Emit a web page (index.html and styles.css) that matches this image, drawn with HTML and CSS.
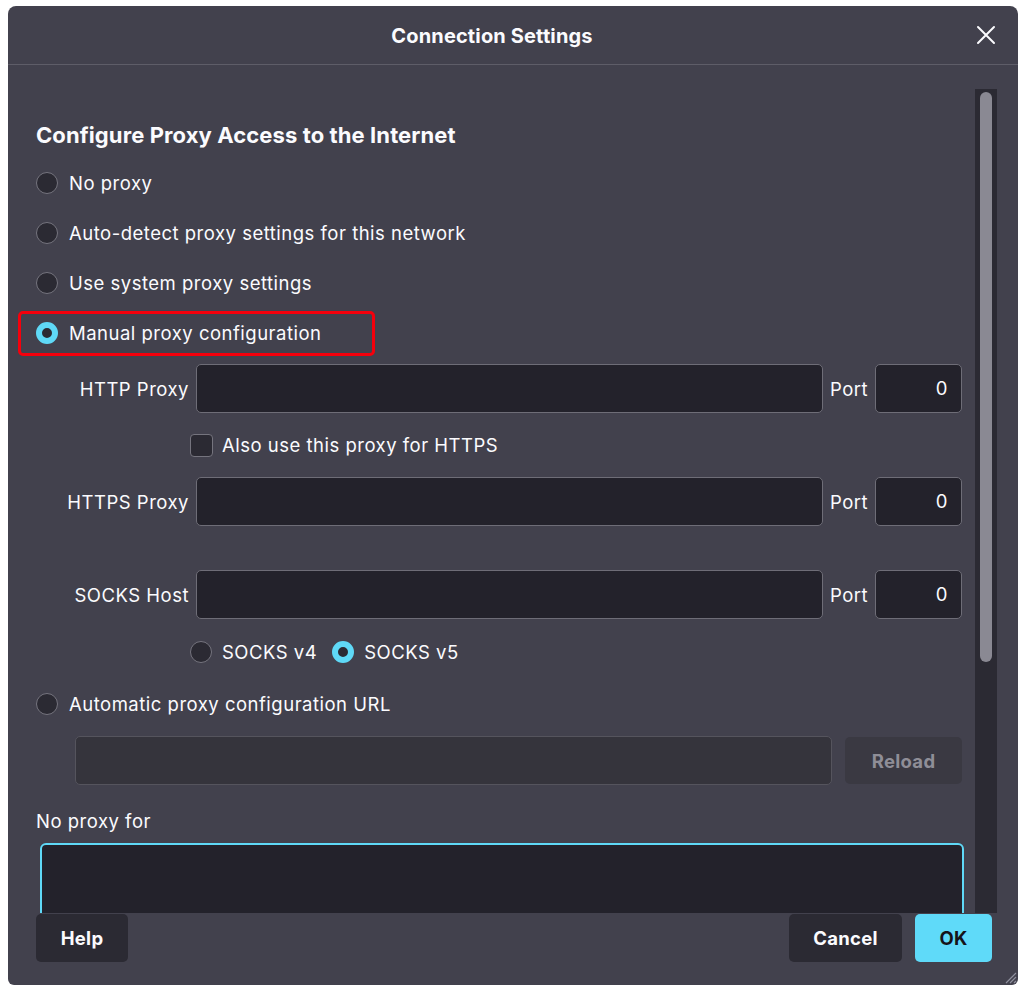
FILE: index.html
```html
<!DOCTYPE html>
<html lang="en">
<head>
    <meta charset="UTF-8">
    <title>Connection Settings</title>
    <link rel="stylesheet" href="styles.css">
</head>
<body>

<div class="dialog">
    <div class="header">
        <div class="title">Connection Settings</div>
        <div class="close">
            <svg width="20" height="20" viewBox="0 0 20 20"><path d="M2 2 L18 18 M18 2 L2 18" stroke="#fbfbfe" stroke-width="2" stroke-linecap="round"/></svg>
        </div>
    </div>
    <div class="separator"></div>

    <div class="scroller">
        <div class="content">
            <h2>Configure Proxy Access to the Internet</h2>

            <div class="opt"><span class="radio"></span>No proxy</div>
            <div class="opt"><span class="radio"></span>Auto-detect proxy settings for this network</div>
            <div class="opt"><span class="radio"></span>Use system proxy settings</div>
            <div class="opt"><div class="highlight"><span class="radio checked"></span>Manual proxy configuration</div></div>

            <div class="field-row">
                <div class="field-label">HTTP Proxy</div>
                <div class="input"></div>
                <div class="port-label">Port</div>
                <div class="input port">0</div>
            </div>
            <div class="check-row"><span class="checkbox"></span>Also use this proxy for HTTPS</div>
            <div class="field-row">
                <div class="field-label">HTTPS Proxy</div>
                <div class="input"></div>
                <div class="port-label">Port</div>
                <div class="input port">0</div>
            </div>
            <div class="field-row socks">
                <div class="field-label">SOCKS Host</div>
                <div class="input"></div>
                <div class="port-label">Port</div>
                <div class="input port">0</div>
            </div>
            <div class="socks-row">
                <span class="radio"></span><span class="socks-v4">SOCKS v4</span>
                <span class="radio checked"></span>SOCKS v5
            </div>

            <div class="opt auto"><span class="radio"></span>Automatic proxy configuration URL</div>
            <div class="url-row">
                <div class="input disabled"></div>
                <div class="btn reload">Reload</div>
            </div>

            <div class="noproxy-label">No proxy for</div>
            <div class="textarea"></div>
        </div>
        <div class="track"><div class="thumb"></div></div>
    </div>

    <div class="footer">
        <div class="btn help">Help</div>
        <div class="spacer"></div>
        <div class="btn cancel">Cancel</div>
        <div class="btn primary">OK</div>
    </div>

    <svg class="grip" width="14" height="14" viewBox="0 0 14 14"><path d="M13 3 L3 13 M13 7 L7 13 M13 11 L11 13" stroke="#8f8f9d" stroke-width="1.2"/></svg>
</div>

</body>
</html>
```

FILE: styles.css
```css
body {
    margin: 0;
    background-color: #fff;
    font-family: Inter, "Noto Sans", sans-serif;
    color: #fbfbfe;
}
.dialog {
    position: relative;
    display: flex;
    flex-direction: column;
    width: 1010px;
    height: 979px;
    margin: 6px 0 0 8px;
    background-color: #42414d;
    border-radius: 8px 8px 6px 6px;
    overflow: hidden;
    font-size: 18.5px;
    letter-spacing: 0.5px;
}
.header {
    display: flex;
    align-items: center;
    height: 58px;
}
.title {
    flex: 1;
    text-align: center;
    font-size: 20px;
    font-weight: 700;
    letter-spacing: 0.15px;
    padding-top: 1px;
}
.close {
    width: 42px;
    display: flex;
    align-items: center;
}
.separator {
    height: 1px;
    background-color: #5e5d68;
}
.scroller {
    display: flex;
    height: 824px;
    margin-top: 24px;
    overflow: hidden;
}
.content {
    flex: 1;
    padding: 32px 13px 0 28px;
}
h2 {
    margin: 0;
    height: 28px;
    line-height: 28px;
    font-size: 22px;
    font-weight: 700;
    letter-spacing: 0.1px;
}
.opt {
    display: flex;
    align-items: center;
    height: 50px;
}
h2 + .opt {
    margin-top: 9px;
}
.radio {
    box-sizing: border-box;
    width: 22px;
    height: 22px;
    border-radius: 50%;
    background-color: #2b2a33;
    border: 1px solid #75747e;
    margin-right: 11px;
    flex-shrink: 0;
}
.radio.checked {
    border: 6px solid #5fd9f7;
    background-color: #2b2a33;
}
.highlight {
    box-sizing: border-box;
    display: flex;
    align-items: center;
    width: 357px;
    height: 45px;
    margin-left: -18px;
    padding-left: 15px;
    border: 3px solid #f5000c;
    border-radius: 5px;
}
.field-row {
    display: flex;
    align-items: center;
    gap: 7px;
    height: 49px;
    margin-top: 6px;
}
.check-row + .field-row {
    margin-top: 0;
}
.field-row.socks {
    margin-top: 44px;
}
.field-label {
    width: 153px;
    text-align: right;
    white-space: nowrap;
}
.port-label {
    width: 38px;
}
.input {
    box-sizing: border-box;
    flex: 1;
    height: 49px;
    background-color: #23222b;
    border: 1px solid #6e6d77;
    border-radius: 5px;
}
.input.port {
    flex: none;
    width: 87px;
    text-align: right;
    line-height: 47px;
    padding-right: 13px;
}
.check-row {
    display: flex;
    align-items: center;
    height: 64px;
    padding-left: 154px;
}
.checkbox {
    box-sizing: border-box;
    width: 23px;
    height: 23px;
    border-radius: 4px;
    background-color: #2b2a33;
    border: 1px solid #75747e;
    margin-right: 9px;
}
.socks-row {
    display: flex;
    align-items: center;
    height: 48px;
    margin-top: 9px;
    padding-left: 154px;
}
.socks-row .radio {
    margin-right: 10px;
}
.socks-v4 {
    margin-right: 15px;
}
.opt.auto {
    height: 48px;
    margin-top: 4px;
}
.url-row {
    display: flex;
    gap: 13px;
    height: 49px;
    margin-top: 8px;
    padding-left: 39px;
}
.input.disabled {
    background-color: #35343c;
    border-color: #55545d;
}
.btn {
    box-sizing: border-box;
    display: flex;
    align-items: center;
    justify-content: center;
    height: 48px;
    background-color: #2b2a33;
    border-radius: 5px;
    font-weight: 700;
    letter-spacing: 0.3px;
}
.btn.help {
    width: 92px;
}
.btn.cancel {
    width: 113px;
}
.btn.reload {
    width: 117px;
    height: 47px;
    margin-top: 1px;
    background-color: #3a3942;
    color: #8f8e97;
}
.noproxy-label {
    height: 24px;
    line-height: 24px;
    margin-top: 24px;
}
.textarea {
    box-sizing: border-box;
    height: 110px;
    margin: 10px -2px 0 4px;
    background-color: #23222b;
    border: 2px solid #5fd9f7;
    border-radius: 6px;
}
.track {
    width: 22px;
    margin-right: 21px;
    background-color: #2b2a33;
    padding: 3px 0 0 5px;
    box-sizing: border-box;
}
.thumb {
    width: 12px;
    height: 570px;
    border-radius: 6px;
    background-color: #8a8993;
}
.footer {
    display: flex;
    gap: 13px;
    padding: 1px 26px 23px 28px;
}
.spacer {
    flex: 1;
}
.btn.primary {
    width: 77px;
    background-color: #5fdaf9;
    color: #15141a;
}
.grip {
    position: absolute;
    right: 1px;
    bottom: 1px;
}
```
